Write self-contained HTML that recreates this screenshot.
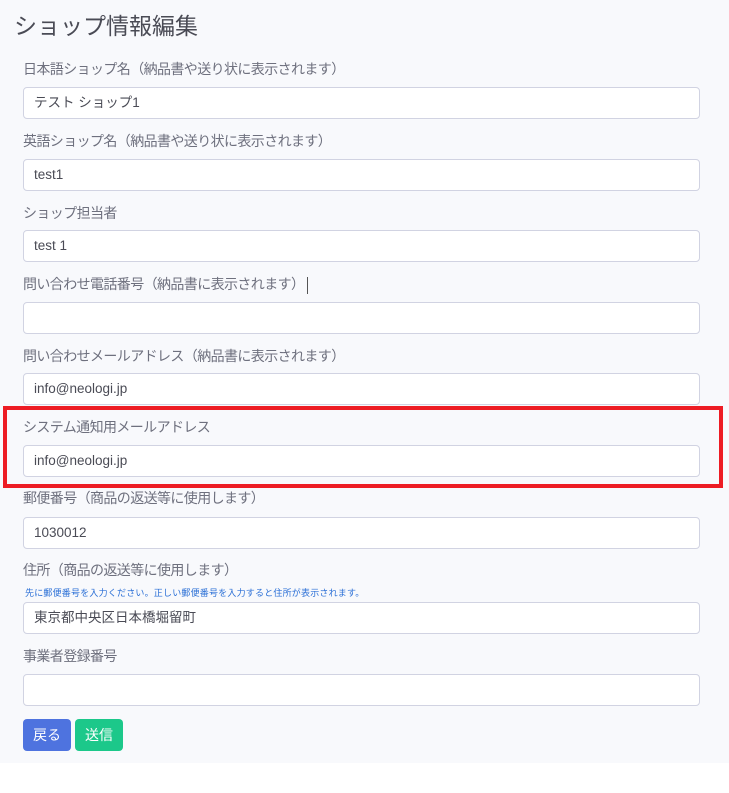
<!DOCTYPE html>
<html><head><meta charset="utf-8"><style>
body{margin:0;width:729px;height:793px;background:#fff;font-family:"Liberation Sans","Noto Sans CJK JP",sans-serif;position:relative;overflow:hidden}
.bg{position:absolute;left:0;top:0;width:729px;height:763px;background:#f8f9fc}
.t{position:absolute;left:14px;top:7px;font-size:23px;color:#4a4b55}
.l{position:absolute;left:23px;font-size:14px;color:#6e707e;letter-spacing:-0.6px}
.i{position:absolute;left:23px;background:#fff;border:1px solid #d1d3e2;border-radius:4px;font-size:13.5px;color:#4a4b55;line-height:30px;padding-left:10px;box-sizing:border-box;width:677px;height:32px}
.red{position:absolute;left:3px;top:406px;width:712px;height:74px;border:4px solid #ed1c24}
.b{position:absolute;top:719px;height:32px;border-radius:4px;color:#fff;font-size:14px;line-height:32px;text-align:center}
</style></head><body>
<div class="bg"></div>
<div class="t">ショップ情報編集</div>
<div class="l" style="top:59px">日本語ショップ名（納品書や送り状に表示されます）</div>
<div class="i" style="top:87px">テスト ショップ1</div>
<div class="l" style="top:131px">英語ショップ名（納品書や送り状に表示されます）</div>
<div class="i" style="top:159px">test1</div>
<div class="l" style="top:203px">ショップ担当者</div>
<div class="i" style="top:230px">test 1</div>
<div class="l" style="top:274px">問い合わせ電話番号（納品書に表示されます）<span style="display:inline-block;width:1px;height:17px;background:#555;vertical-align:middle;margin-left:3px"></span></div>
<div class="i" style="top:302px"></div>
<div class="l" style="top:346px">問い合わせメールアドレス（納品書に表示されます）</div>
<div class="i" style="top:373px">info@neologi.jp</div>
<div class="l" style="top:417px">システム通知用メールアドレス</div>
<div class="i" style="top:445px">info@neologi.jp</div>
<div class="red"></div>
<div class="l" style="top:488px">郵便番号（商品の返送等に使用します）</div>
<div class="i" style="top:517px">1030012</div>
<div class="l" style="top:560px">住所（商品の返送等に使用します）</div>
<div style="position:absolute;left:25px;top:586px;font-size:9px;color:#2a6fd6;letter-spacing:0.2px">先に郵便番号を入力ください。正しい郵便番号を入力すると住所が表示されます。</div>
<div class="i" style="top:602px">東京都中央区日本橋堀留町</div>
<div class="l" style="top:646px">事業者登録番号</div>
<div class="i" style="top:674px"></div>
<div class="b" style="left:23px;width:48px;background:#4e73df">戻る</div>
<div class="b" style="left:75px;width:48px;background:#1cc88a">送信</div>
</body></html>
